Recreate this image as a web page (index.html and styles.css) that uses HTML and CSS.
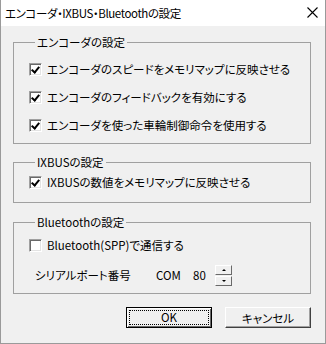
FILE: index.html
```html
<!DOCTYPE html>
<html lang="ja">
<head>
<meta charset="UTF-8">
<title>エンコーダ・IXBUS・Bluetoothの設定</title>
<link rel="stylesheet" href="styles.css">
</head>
<body>

<div class="window">
  <div class="titlebar">
    <span class="title">エンコーダ・IXBUS・Bluetoothの設定</span>
    <svg class="close" width="11" height="11" viewBox="0 0 11 11">
      <path d="M0.5 0.5 L10.5 10.5 M10.5 0.5 L0.5 10.5" stroke="#000" stroke-width="1.1" fill="none"/>
    </svg>
  </div>

  <div class="dialog">
    <fieldset class="group group-encoder">
      <legend>エンコーダの設定</legend>
      <label class="check"><span class="box checked"></span>エンコーダのスピードをメモリマップに反映させる</label>
      <label class="check"><span class="box checked"></span>エンコーダのフィードバックを有効にする</label>
      <label class="check"><span class="box checked"></span>エンコーダを使った車輪制御命令を使用する</label>
    </fieldset>

    <fieldset class="group group-ixbus">
      <legend>IXBUSの設定</legend>
      <label class="check"><span class="box checked"></span>IXBUSの数値をメモリマップに反映させる</label>
    </fieldset>

    <fieldset class="group group-bt">
      <legend>Bluetoothの設定</legend>
      <label class="check"><span class="box"></span>Bluetooth(SPP)で通信する</label>
      <div class="port-row">
        <span class="port-label">シリアルポート番号</span>
        <span class="port-com">COM</span>
        <span class="port-num">80</span>
        <span class="spin">
          <span class="spin-btn"><span class="tri up"></span></span>
          <span class="spin-btn"><span class="tri down"></span></span>
        </span>
      </div>
    </fieldset>

    <div class="buttons">
      <button class="btn btn-default"><span class="focus">OK</span></button>
      <button class="btn">キャンセル</button>
    </div>
  </div>
</div>

</body>
</html>
```

FILE: styles.css
```css
html, body {
  margin: 0;
  padding: 0;
}
body {
  width: 326px;
  height: 344px;
  font-family: "Noto Sans CJK JP", "Noto Sans", sans-serif;
  font-size: 11.5px;
  font-feature-settings: "palt";
  color: #000;
  background: #fff;
}
.window {
  box-sizing: border-box;
  width: 326px;
  height: 344px;
  border: 1px solid #9a9a9a;
  border-top: none;
  background: #f0f0f0;
}
.titlebar {
  height: 26px;
  background: #fff;
  display: flex;
  align-items: center;
  justify-content: space-between;
  padding: 0 7px 0 4px;
}
.title {
  line-height: 14px;
  letter-spacing: -0.4px;
}
.close {
  display: block;
  margin-top: -1px;
}
.dialog {
  padding: 9px 14px 0 12px;
}
.group {
  margin: 0;
  padding: 6px 0 4px 15px;
  border: 1px solid #a0a0a0;
  min-width: 0;
}
.group legend {
  padding: 0 2px;
  margin-left: 6px;
  line-height: 14px;
  height: 14px;
}
.group-ixbus {
  margin-top: 11px;
  padding-top: 0;
  padding-bottom: 7px;
}
.group-bt {
  margin-top: 12px;
  padding-top: 2px;
  padding-bottom: 2px;
}
.check {
  display: flex;
  align-items: center;
  height: 28px;
  line-height: 14px;
}
.group-ixbus .check {
  height: 26px;
}
.box {
  box-sizing: border-box;
  width: 13px;
  height: 13px;
  margin-right: 5px;
  background: #fff;
  border: 1px solid;
  border-color: #a0a0a0 #fff #fff #a0a0a0;
  box-shadow: inset 1px 1px 0 #696969, inset -1px -1px 0 #e3e3e3;
  position: relative;
}
.box.checked::after {
  content: "";
  position: absolute;
  left: 3px;
  top: 1px;
  width: 3px;
  height: 6px;
  border: solid #000;
  border-width: 0 2px 2px 0;
  transform: rotate(40deg);
}
.port-row {
  display: flex;
  align-items: center;
  height: 32px;
  padding-left: 6px;
}
.port-label {
  width: 121px;
}
.port-com {
  width: 37px;
}
.port-num {
  width: 22px;
}
.spin {
  display: flex;
  flex-direction: column;
  gap: 1px;
}
.spin-btn {
  box-sizing: border-box;
  width: 17px;
  height: 10px;
  background: #f0f0f0;
  border: 1px solid;
  border-color: #fff #696969 #696969 #fff;
  display: flex;
  align-items: center;
  justify-content: center;
}
.tri {
  width: 0;
  height: 0;
  border-left: 2px solid transparent;
  border-right: 2px solid transparent;
}
.tri.up {
  border-bottom: 2px solid #000;
}
.tri.down {
  border-top: 2px solid #000;
}
.buttons {
  display: flex;
  justify-content: flex-end;
  gap: 13px;
  margin-top: 13px;
}
.btn {
  box-sizing: border-box;
  width: 86px;
  height: 21px;
  padding: 0;
  font: inherit;
  line-height: 14px;
  color: #000;
  background: #f0f0f0;
  border: 1px solid;
  border-color: #fff #404040 #404040 #fff;
  box-shadow: inset -1px -1px 0 #a0a0a0;
}
.btn-default {
  border: 1px solid #000;
  box-shadow: inset 1px 1px 0 #fff, inset -1px -1px 0 #696969;
  padding: 2px;
}
.focus {
  display: block;
  box-sizing: border-box;
  height: 15px;
  border: 1px dotted #000;
  line-height: 13px;
}
```
